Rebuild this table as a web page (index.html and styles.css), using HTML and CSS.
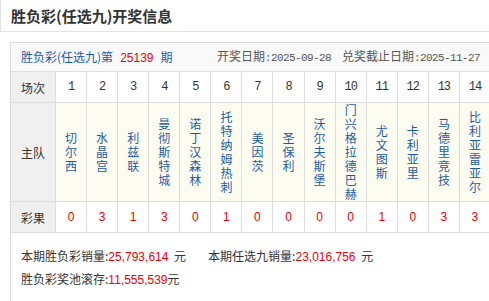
FILE: index.html
```html
<!DOCTYPE html>
<html lang="zh-CN">
<head>
<meta charset="utf-8">
<title>胜负彩(任选九)开奖信息</title>
<link rel="stylesheet" href="styles.css">
</head>
<body>
<div class="page">
  <div class="head">
    <h1 class="title">胜负彩(任选九)开奖信息</h1>
  </div>
  <div class="panel">
    <div class="info">
      <div class="issue-line">胜负彩(任选九)第<span class="issue">25139</span>期</div>
      <div class="dates">
        <span>开奖日期<span class="mono">:2025-09-28</span></span>
        <span class="date2">兑奖截止日期<span class="mono">:2025-11-27</span></span>
      </div>
    </div>
    <div class="grid">
      <div class="hd">场次</div>
      <div class="no">1</div><div class="no">2</div><div class="no">3</div><div class="no">4</div><div class="no">5</div><div class="no">6</div><div class="no">7</div><div class="no">8</div><div class="no">9</div><div class="no">10</div><div class="no">11</div><div class="no">12</div><div class="no">13</div><div class="no">14</div>

      <div class="hd">主队</div>
      <div class="team"><span>切尔西</span></div>
      <div class="team"><span>水晶宫</span></div>
      <div class="team"><span>利兹联</span></div>
      <div class="team"><span>曼彻斯特城</span></div>
      <div class="team"><span>诺丁汉森林</span></div>
      <div class="team"><span>托特纳姆热刺</span></div>
      <div class="team"><span>美因茨</span></div>
      <div class="team"><span>圣保利</span></div>
      <div class="team"><span>沃尔夫斯堡</span></div>
      <div class="team"><span>门兴格拉德巴赫</span></div>
      <div class="team"><span>尤文图斯</span></div>
      <div class="team"><span>卡利亚里</span></div>
      <div class="team"><span>马德里竞技</span></div>
      <div class="team"><span>比利亚雷亚尔</span></div>

      <div class="hd">彩果</div>
      <div class="res">0</div><div class="res">3</div><div class="res">1</div><div class="res">3</div><div class="res">0</div><div class="res">1</div><div class="res">0</div><div class="res">0</div><div class="res">0</div><div class="res">0</div><div class="res">1</div><div class="res">0</div><div class="res">3</div><div class="res">3</div>
    </div>
    <div class="sales">
      <p class="sales-line"><span>本期胜负彩销量:<span class="amt">25,793,614</span> 元</span><span class="sale2">本期任选九销量:<span class="amt">23,016,756</span> 元</span></p>
      <p class="sales-line">胜负彩奖池滚存:<span class="amt tight">11,555,539</span>元</p>
    </div>
  </div>
</div>
</body>
</html>
```

FILE: styles.css
```css
html, body {
  margin: 0;
  padding: 0;
  overflow: hidden;
  background: #fff;
}

.page {
  width: 489px;
  height: 301px;
  overflow: hidden;
  font-family: "Noto Sans CJK SC", "Liberation Sans", sans-serif;
  font-size: 12px;
  color: #333;
}

.head {
  width: 520px;
  height: 31px;
  border-left: 1px solid #e3e3e3;
  border-bottom: 1px solid #e3e3e3;
  display: flex;
  align-items: center;
  padding-left: 10px;
}

.title {
  margin: 0;
  font-size: 15px;
  font-weight: bold;
  color: #333;
  line-height: 20px;
}

.panel {
  margin: 10px 0 0 10px;
  width: 481px;
  box-sizing: border-box;
  border: 1px solid #ddd;
  border-bottom: none;
  min-height: 259px;
}

.info {
  height: 28px;
  background: #f9f9f9;
  border-bottom: 1px solid #ddd;
  display: flex;
  align-items: center;
  justify-content: space-between;
  padding: 0 10px 0 10px;
}

.issue-line {
  color: #1d5aa6;
  line-height: 16px;
}

.issue {
  font-family: "Liberation Sans", sans-serif;
  color: #e00;
  margin: 0 7px 0 7px;
}

.dates {
  color: #555;
  line-height: 16px;
  display: flex;
}

.date2 {
  margin-left: 11px;
}

.mono {
  font-family: "Liberation Mono", monospace;
  font-size: 11px;
  letter-spacing: -0.6px;
}

.grid {
  display: grid;
  grid-template-columns: 44px repeat(14, 1fr);
  grid-template-rows: 30px 98px 30px;
  gap: 1px;
  background: #ddd;
  padding-bottom: 1px;
}

.grid > div {
  display: flex;
  align-items: center;
  justify-content: center;
  background: #fff;
}

.grid > .hd {
  background: #f0f0f0;
  color: #333;
}

.no {
  font-family: "Liberation Mono", monospace;
  font-size: 12px;
  letter-spacing: -1px;
  color: #333;
}

.grid > .team {
  background: #fdfcf0;
}

.team span {
  display: block;
  width: 12px;
  line-height: 14px;
  word-break: break-all;
  color: #1d5aa6;
}

.res {
  font-family: "Liberation Sans", sans-serif;
  font-size: 12px;
  color: #e00;
}

.sales {
  padding: 12px 10px 0 10px;
}

.sales-line {
  margin: 0;
  line-height: 22px;
  color: #333;
}

.amt {
  font-family: "Liberation Sans", sans-serif;
  color: #e00;
  margin-right: 3px;
}

.amt.tight {
  margin-right: 0;
}

.sale2 {
  margin-left: 22px;
}
```
